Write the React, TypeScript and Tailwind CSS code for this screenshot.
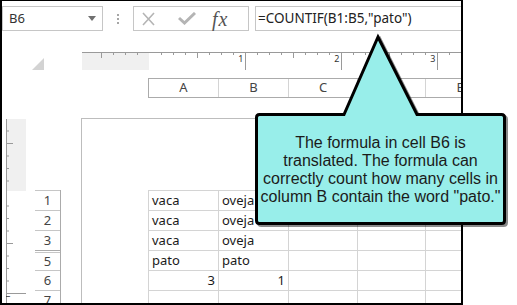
import React from "react";

const cols = ["A", "B", "C", "D", "E"];
const colW = ["w-[69px]", "w-[70px]", "w-[69px]", "w-[68px]", "w-[69px]"];

const rows: { label: string; a: string; b: string; num?: boolean; h: string }[] = [
  { label: "1", a: "vaca", b: "oveja", h: "h-[20px]" },
  { label: "2", a: "vaca", b: "oveja", h: "h-[20px]" },
  { label: "3", a: "vaca", b: "oveja", h: "h-[20px]" },
  { label: "5", a: "pato", b: "pato", h: "h-[20px]" },
  { label: "6", a: "3", b: "1", num: true, h: "h-[20px]" },
  { label: "7", a: "", b: "", h: "h-[20px]" },
];

const HRuler = () => {
  const ticks = [];
  for (let k = -4; k <= 26; k++) {
    const x = 67.5 + 12 * k;
    if (k > 0 && k % 8 === 0) {
      ticks.push(<line key={k} x1={x} y1={0} x2={x} y2={18} stroke="#9a9a9a" />);
      ticks.push(
        <text key={"t" + k} x={x - 2} y={10} fontSize="9" textAnchor="end" fill="#333" fontFamily="Noto Sans, sans-serif">
          {k / 8}
        </text>
      );
    } else if (k % 4 === 0 && k !== 0) {
      ticks.push(<line key={k} x1={x} y1={0} x2={x} y2={6} stroke="#9a9a9a" />);
    } else if (k !== 0) {
      ticks.push(<line key={k} x1={x} y1={0} x2={x} y2={3} stroke="#9a9a9a" />);
    }
  }
  return (
    <svg width="379" height="18" className="block">
      <rect x="0" y="1" width="67" height="17" fill="#f0f0f0" />
      <line x1="0" y1="0.5" x2="379" y2="0.5" stroke="#9a9a9a" />
      {ticks}
    </svg>
  );
};

const VRuler = () => {
  const ticks = [];
  for (let k = -5; k <= 9; k++) {
    const y = 75.5 + 12.5 * k;
    if (k > 0 && k % 8 === 0) {
      ticks.push(<line key={k} x1={0} y1={y} x2={20} y2={y} stroke="#9a9a9a" />);
      ticks.push(
        <text key={"t" + k} x={0} y={0} fontSize="9" fill="#333" fontFamily="Noto Sans, sans-serif" transform={`translate(4 ${y + 6}) rotate(-90)`}>
          1
        </text>
      );
    } else if (k % 4 === 0 && k !== 0) {
      ticks.push(<line key={k} x1={0} y1={y} x2={7} y2={y} stroke="#9a9a9a" />);
    } else if (k !== 0) {
      ticks.push(<line key={k} x1={0} y1={y} x2={3} y2={y} stroke="#9a9a9a" />);
    }
  }
  return (
    <svg width="21" height="186" className="block shrink-0">
      <rect x="1" y="1" width="19" height="72" fill="#f0f0f0" />
      <line x1="0.5" y1="1" x2="0.5" y2="186" stroke="#9a9a9a" />
      {ticks}
    </svg>
  );
};

const Callout = () => (
  <div className="absolute left-[253px] top-[31px] w-[258px] h-[198px]">
    <svg width="258" height="198" className="absolute left-0 top-0">
      <path
        d="M 6.5 83.5 H 91 L 125 6 L 164 83.5 H 248.5 Q 251.5 83.5 251.5 86.5 V 189.5 Q 251.5 192.5 248.5 192.5 H 6.5 Q 3.5 192.5 3.5 189.5 V 86.5 Q 3.5 83.5 6.5 83.5 Z"
        fill="#000"
        stroke="#000"
        strokeWidth="3"
        opacity="0.45"
        transform="translate(2 2)"
      />
      <path
        d="M 6.5 83.5 H 91 L 125 6 L 164 83.5 H 248.5 Q 251.5 83.5 251.5 86.5 V 189.5 Q 251.5 192.5 248.5 192.5 H 6.5 Q 3.5 192.5 3.5 189.5 V 86.5 Q 3.5 83.5 6.5 83.5 Z"
        fill="#98eeea"
        stroke="#000"
        strokeWidth="3"
      />
    </svg>
    <div className="absolute left-[3px] top-[85px] w-[249px] h-[107px] flex items-center justify-center text-center text-[16px] leading-[18px] text-[#1b1b1b] font-['Liberation_Sans',Arial,sans-serif]">
      <p>
        The formula in cell B6 is
        <br />
        translated. The formula can
        <br />
        correctly count how many cells in
        <br />
        column B contain the word "pato."
      </p>
    </div>
  </div>
);

export default function App() {
  return (
    <div className="relative w-[517px] h-[305px] bg-white overflow-hidden font-['Noto_Sans',sans-serif]">
      <div className="w-[463px] h-[305px] border-t border-l-2 border-r-2 border-b-2 border-black flex flex-col overflow-hidden">
        {/* formula toolbar */}
        <div className="flex h-[25px] mt-[5px] shrink-0">
          <div className="w-[101px] border border-[#c6c6c6] flex items-center justify-between pl-[6px] pr-[6px]">
            <span className="text-[13px] text-[#333]">B6</span>
            <svg width="8" height="5">
              <polygon points="0,0 8,0 4,5" fill="#707070" />
            </svg>
          </div>
          <div className="w-[30px] flex flex-col items-center justify-center gap-[2px]">
            <span className="w-[2px] h-[2px] bg-[#a6a6a6]" />
            <span className="w-[2px] h-[2px] bg-[#a6a6a6]" />
            <span className="w-[2px] h-[2px] bg-[#a6a6a6]" />
          </div>
          <div className="w-[116px] border border-[#c6c6c6] flex items-center pl-[8px]">
            <svg width="13" height="14" className="shrink-0">
              <path d="M1 1 L12 13 M12 1 L1 13" stroke="#b4b4b4" strokeWidth="1.6" />
            </svg>
            <svg width="18" height="13" className="ml-[23px] shrink-0">
              <path d="M1 6 L6.5 11 L17 1" stroke="#b4b4b4" strokeWidth="3" fill="none" />
            </svg>
            <span className="ml-[16px] text-[20px] leading-none italic text-[#555] font-['Liberation_Serif',serif] tracking-[1px]">
              fx
            </span>
          </div>
          <div className="flex-1 ml-[6px] border-y border-l border-[#c6c6c6] flex items-center pl-[2px]">
            <span className="text-[13.5px] text-[#222] whitespace-nowrap">=COUNTIF(B1:B5,"pato")</span>
          </div>
        </div>

        {/* ruler */}
        <div className="flex h-[18px] mt-[21px] shrink-0">
          <div className="w-[80px] flex items-end">
            <svg width="28" height="13" className="ml-[15px] -mb-[1px]">
              <polygon points="27,0 27,12 15,12" fill="#d3d3d3" />
            </svg>
          </div>
          <HRuler />
        </div>

        {/* column headers */}
        <div className="flex mt-[8px] pl-[146px] shrink-0">
          <div className="flex h-[20px] border-y border-l border-[#ababab]">
            {cols.map((c, i) => (
              <div
                key={c}
                className={`${colW[i]} shrink-0 flex items-center justify-center text-[13px] text-[#444] ${i > 0 ? "border-l border-[#d4d4d4]" : ""}`}
              >
                {c}
              </div>
            ))}
          </div>
        </div>

        {/* sheet body */}
        <div className="flex flex-1 mt-[20px] min-h-0">
          <div className="ml-[4px]">
            <VRuler />
          </div>
          <div className="ml-[8px] w-[26px] shrink-0 pt-[72px]">
            <div className="border-r border-[#ababab]">
              {rows.map((r) => (
                <React.Fragment key={r.label}>
                  {r.label === "5" && <div className="h-[2px] border-t border-[#ababab]" />}
                  <div
                    className={`${r.label === "5" ? "h-[18px]" : "h-[20px]"} border-t border-[#c6c6c6] flex items-center justify-center text-[13px] text-[#444]`}
                  >
                    {r.label}
                  </div>
                </React.Fragment>
              ))}
            </div>
          </div>
          <div className="ml-[20px] flex-1 border-l border-t border-[#bdbdbd] pl-[66px] pt-[71px] min-w-0">
            <div className="border-l border-[#d4d4d4]">
              {rows.map((r) => (
                <div key={r.label} className={`flex ${r.h} border-t border-[#d4d4d4]`}>
                  {cols.map((c, i) => {
                    const val = i === 0 ? r.a : i === 1 ? r.b : "";
                    return (
                      <div
                        key={c}
                        className={`${colW[i]} shrink-0 flex items-center text-[13px] text-[#1a1a1a] ${i > 0 ? "border-l border-[#d4d4d4]" : ""} ${r.num ? "justify-end pr-[3px]" : "pl-[3px]"}`}
                      >
                        {val}
                      </div>
                    );
                  })}
                </div>
              ))}
            </div>
          </div>
        </div>
      </div>
      <Callout />
    </div>
  );
}
